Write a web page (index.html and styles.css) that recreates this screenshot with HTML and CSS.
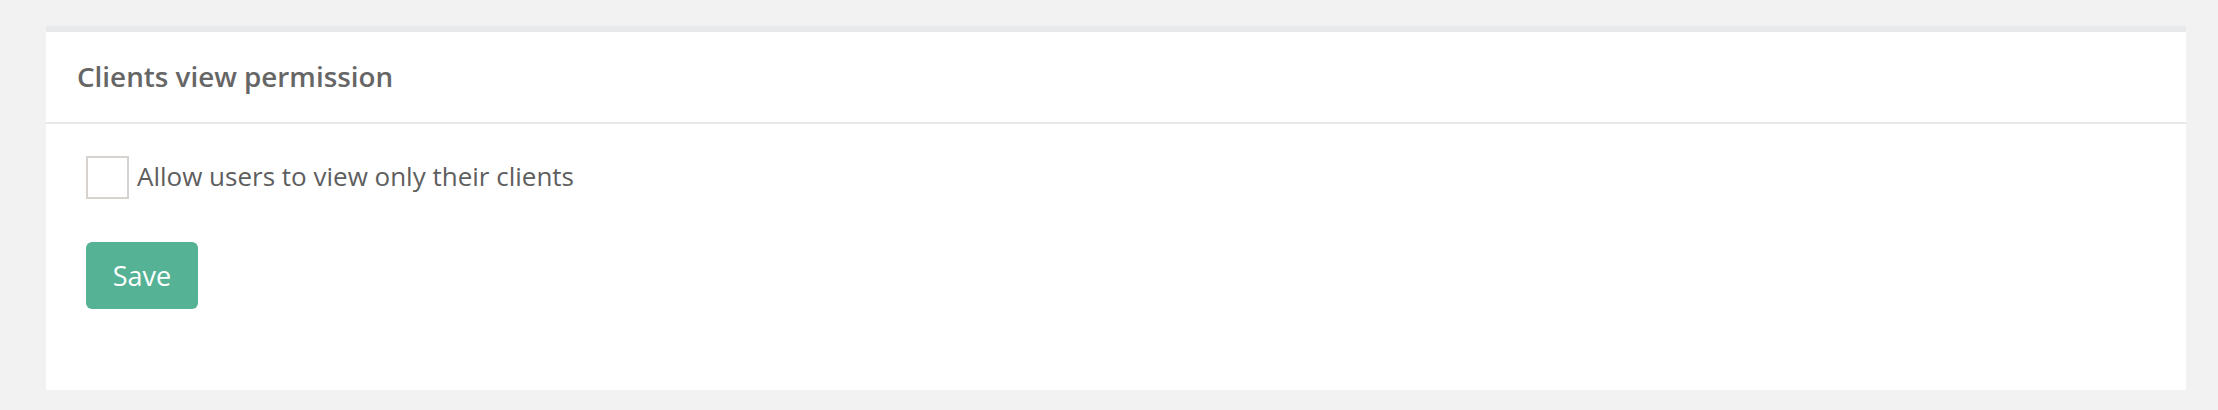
FILE: index.html
```html
<!DOCTYPE html>
<html>
  <head>
    <meta charset="UTF-8">
    <title>Clients view permission</title>
    <link rel="stylesheet" href="styles.css">
  </head>
  <body>
    <div class="panel">
      <div class="panel-heading">
        <h4 class="panel-title">Clients view permission</h4>
      </div>
      <form class="panel-body">
        <label class="check-row" for="own-clients">
          <input type="checkbox" id="own-clients" name="own_clients">
          <span class="check-box"></span>
          <span class="check-text">Allow users to view only their clients</span>
        </label>
        <div class="actions">
          <button type="submit" class="btn-save">Save</button>
        </div>
      </form>
    </div>
  </body>
</html>
```

FILE: styles.css
```css
body {
  margin: 0;
  padding: 26px 32px 20px 46px;
  background: #f2f2f2;
  font-family: "Open Sans", "Noto Sans", sans-serif;
}
.panel {
  background: #fff;
  border-top: 6px solid #e8e9eb;
}
.panel-heading {
  height: 88px;
  display: flex;
  align-items: center;
  padding: 0 31px 2px 31px;
  border-bottom: 2px solid #e8e8e8;
}
.panel-title {
  margin: 0;
  font-size: 27.8px;
  font-weight: 600;
  color: #666;
}
.panel-body {
  padding: 32px 40px 81px 40px;
  display: flex;
  flex-direction: column;
  align-items: flex-start;
}
.check-row {
  display: flex;
  align-items: center;
  gap: 8px;
  cursor: pointer;
}
.check-row input {
  display: none;
}
.check-box {
  width: 39px;
  height: 39px;
  border: 2px solid #d6d3ce;
  background: #fff;
}
.check-text {
  font-size: 26px;
  color: #5e5e5e;
  margin-top: -4px;
}
.actions {
  margin-top: 43px;
}
.btn-save {
  width: 112px;
  height: 67px;
  border: none;
  border-radius: 6px;
  background: #55b295;
  color: #fff;
  font-family: "Open Sans", "Noto Sans", sans-serif;
  font-size: 27px;
  cursor: pointer;
}
```
